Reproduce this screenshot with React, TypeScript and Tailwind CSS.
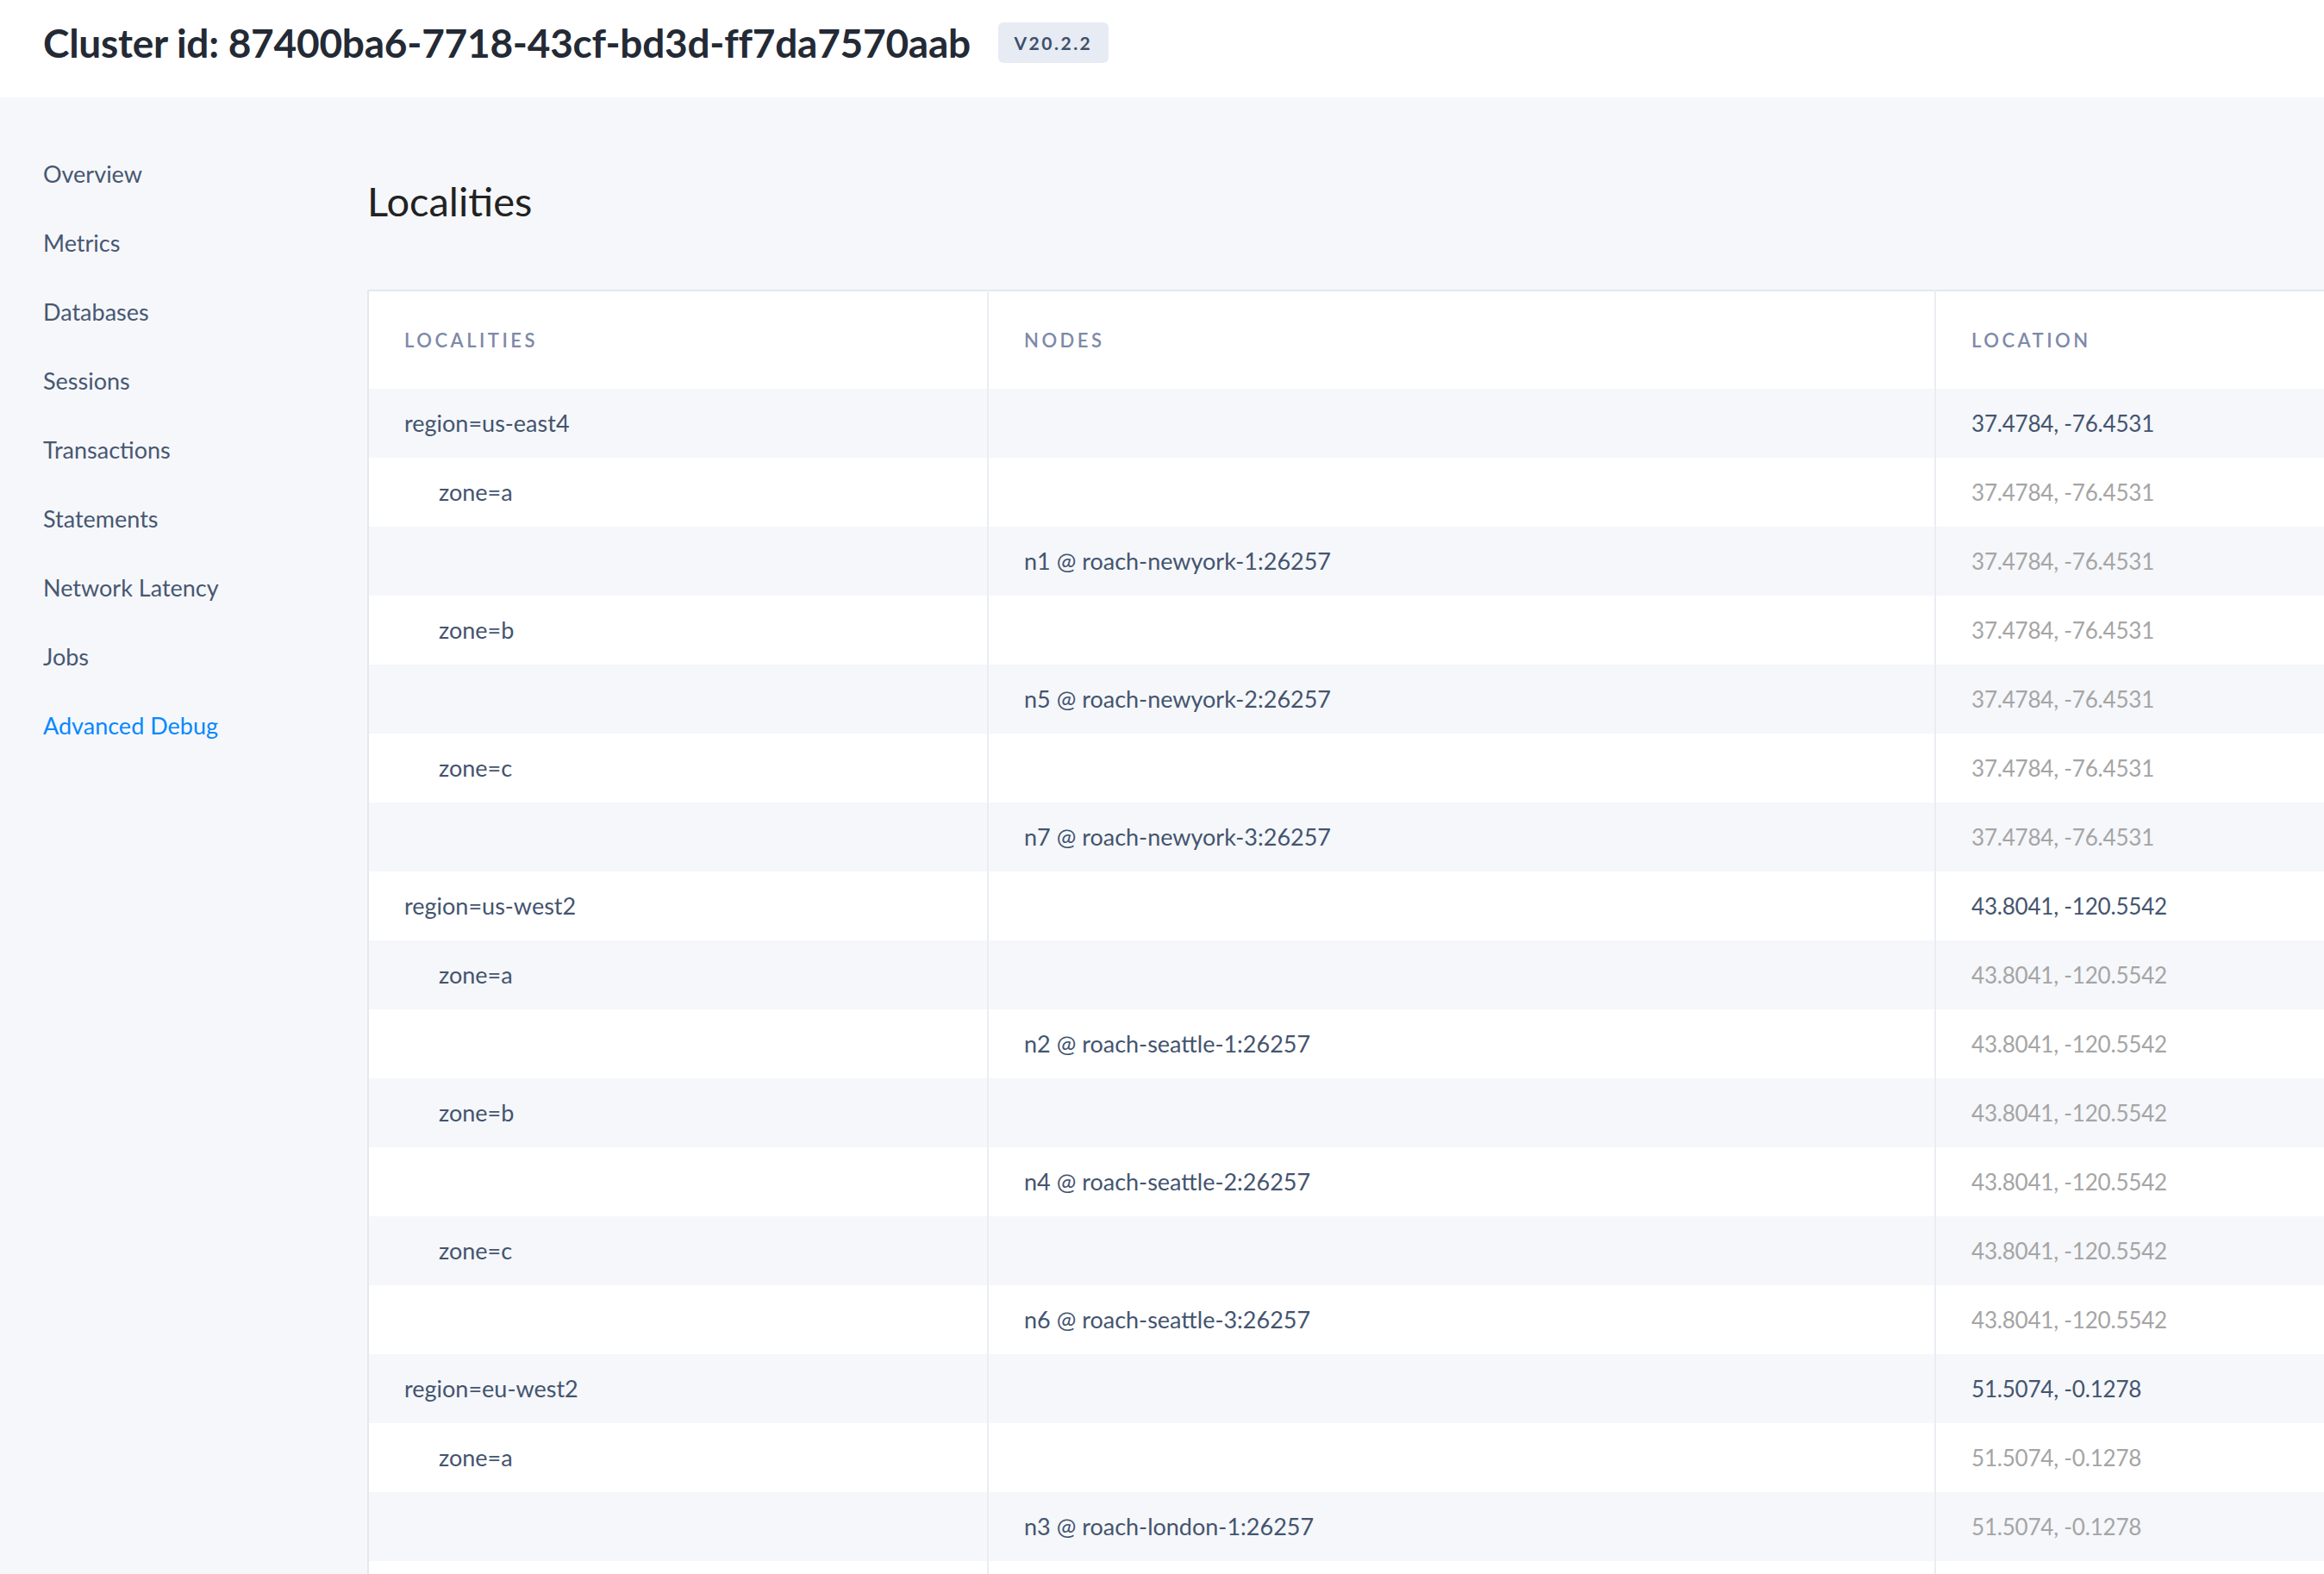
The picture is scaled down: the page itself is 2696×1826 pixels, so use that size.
import React from "react";

type Row = {
    locality?: string;
    indent?: boolean;
    node?: string;
    location?: string;
    strong?: boolean;
};

const navItems = [
    "Overview",
    "Metrics",
    "Databases",
    "Sessions",
    "Transactions",
    "Statements",
    "Network Latency",
    "Jobs",
    "Advanced Debug",
];

const NY = "37.4784, -76.4531";
const SEA = "43.8041, -120.5542";
const LON = "51.5074, -0.1278";

const rows: Row[] = [
    { locality: "region=us-east4", location: NY, strong: true },
    { locality: "zone=a", indent: true, location: NY },
    { node: "n1 @ roach-newyork-1:26257", location: NY },
    { locality: "zone=b", indent: true, location: NY },
    { node: "n5 @ roach-newyork-2:26257", location: NY },
    { locality: "zone=c", indent: true, location: NY },
    { node: "n7 @ roach-newyork-3:26257", location: NY },
    { locality: "region=us-west2", location: SEA, strong: true },
    { locality: "zone=a", indent: true, location: SEA },
    { node: "n2 @ roach-seattle-1:26257", location: SEA },
    { locality: "zone=b", indent: true, location: SEA },
    { node: "n4 @ roach-seattle-2:26257", location: SEA },
    { locality: "zone=c", indent: true, location: SEA },
    { node: "n6 @ roach-seattle-3:26257", location: SEA },
    { locality: "region=eu-west2", location: LON, strong: true },
    { locality: "zone=a", indent: true, location: LON },
    { node: "n3 @ roach-london-1:26257", location: LON },
    // next row sits below the fold
    {},
];

export default function App() {
    return (
        <div className="min-h-screen h-[1826px] overflow-hidden bg-[#f6f7fa] font-['Lato',sans-serif] text-[#44546f]">
            {/* top bar */}
            <header className="h-[113px] bg-white flex items-center pl-[50px] pb-[14px] gap-[32px]">
                <h1 className="text-[46px] font-bold text-[#242a35] tracking-[-0.25px]">
                    Cluster id: 87400ba6-7718-43cf-bd3d-ff7da7570aab
                </h1>
                <span className="h-[47px] w-[128px] rounded-[6px] bg-[#e7ebf3] flex items-center justify-center text-[21px] font-bold tracking-[2.5px] text-[#3f4f6a]">
                    V20.2.2
                </span>
            </header>

            <div className="flex">
                <nav className="w-[426px] shrink-0 pl-[50px] pt-[49px] flex flex-col">
                    {navItems.map((item) => (
                        <a
                            key={item}
                            className={
                                "h-[80px] flex items-center text-[27px] " +
                                (item === "Advanced Debug" ? "text-[#0788ff]" : "text-[#475872]")
                            }
                        >
                            {item}
                        </a>
                    ))}
                </nav>

                <main className="flex-1 min-w-0 overflow-hidden">
                    <h2 className="h-[223px] pt-[90px] text-[47px] leading-[60px] text-[#222222]">Localities</h2>

                    <table className="table-fixed w-[2400px] border-2 border-[#e3e8ef] border-collapse bg-white">
                        <colgroup>
                            <col className="w-[719px]" />
                            <col className="w-[1099px]" />
                            <col />
                        </colgroup>
                        <thead>
                            <tr className="h-[114px] bg-white">
                                {["LOCALITIES", "NODES", "LOCATION"].map((h, i) => (
                                    <th
                                        key={h}
                                        className={
                                            "text-left font-semibold text-[22px] tracking-[3.5px] text-[#7e89a9] px-[41px] " +
                                            (i > 0 ? "border-l-2 border-[#eaedf2]" : "")
                                        }
                                    >
                                        {h}
                                    </th>
                                ))}
                            </tr>
                        </thead>
                        <tbody>
                            {rows.map((r, i) => (
                                <tr key={i} className={"h-[80px] text-[27px] " + (i % 2 === 0 ? "bg-[#f5f7fa]" : "bg-white")}>
                                    <td className={"px-[41px] " + (r.indent ? "pl-[81px]" : "")}>{r.locality}</td>
                                    <td className="px-[41px] border-l-2 border-[#eaedf2]">{r.node}</td>
                                    <td
                                        className={
                                            "px-[41px] border-l-2 border-[#eaedf2] text-[26px] tracking-[-0.2px] " +
                                            (r.strong ? "text-[#44556f]" : "text-[#a5a5a5]")
                                        }
                                    >
                                        {r.location}
                                    </td>
                                </tr>
                            ))}
                        </tbody>
                    </table>
                </main>
            </div>
        </div>
    );
}
